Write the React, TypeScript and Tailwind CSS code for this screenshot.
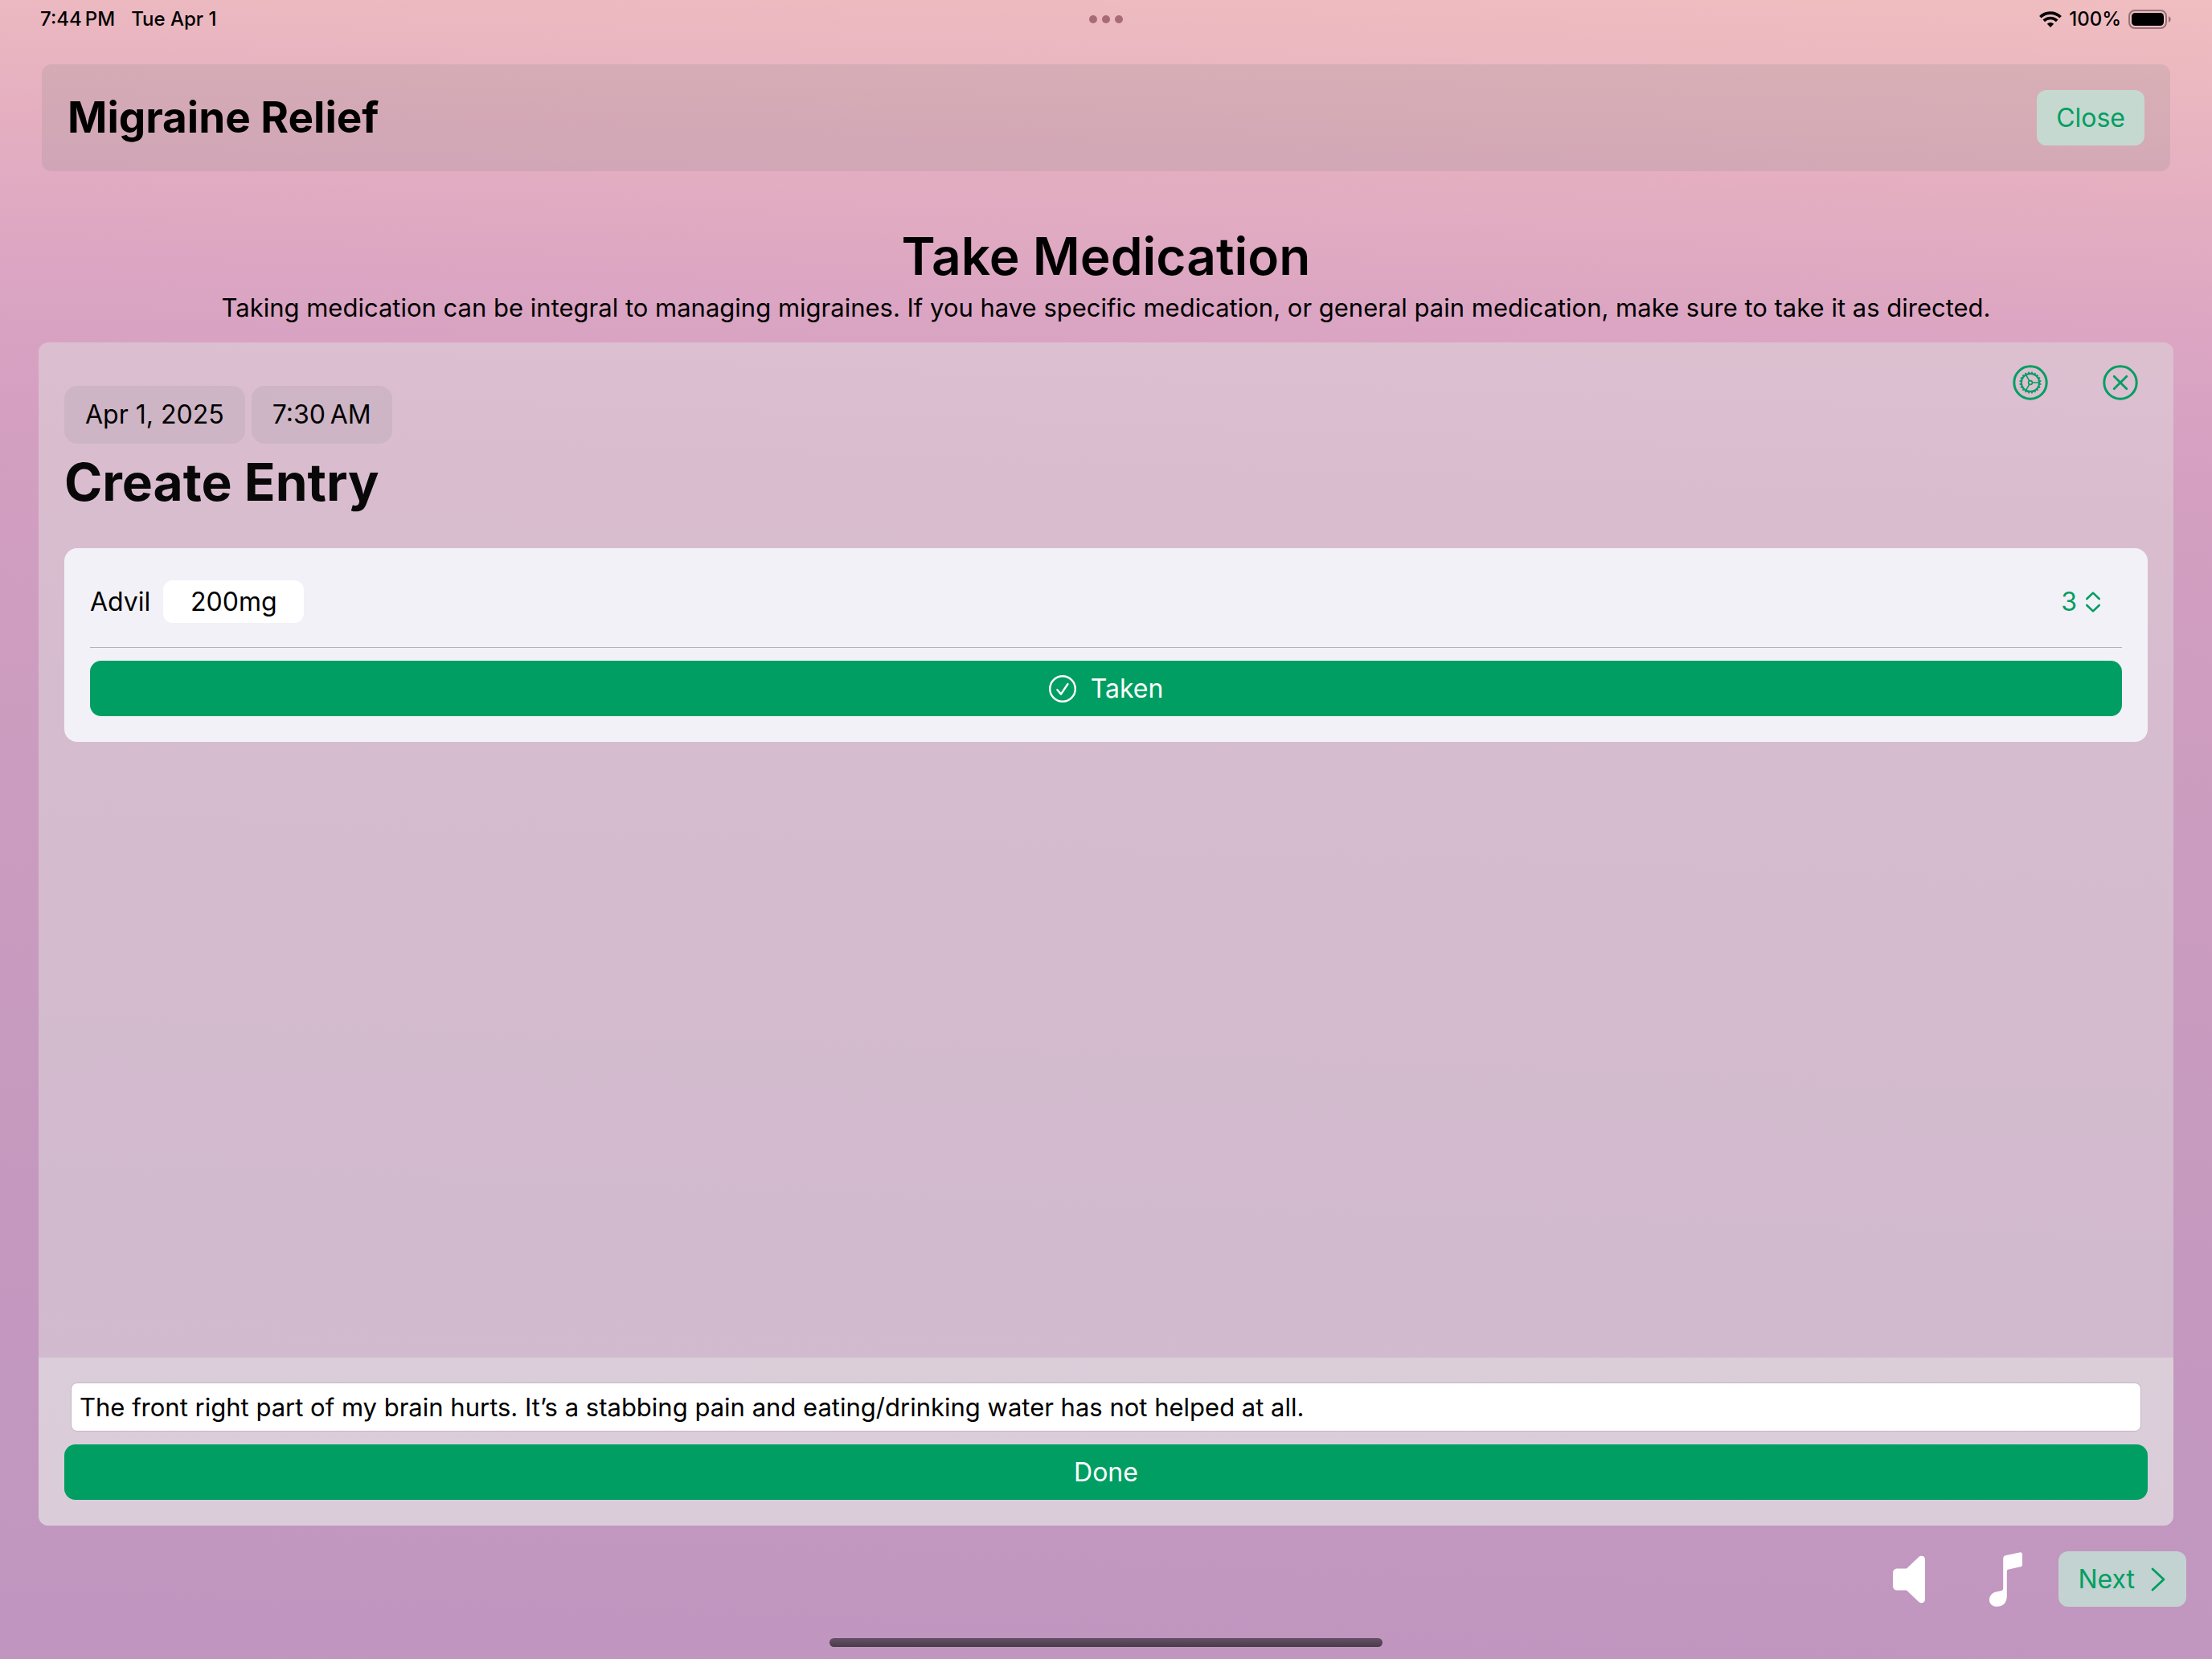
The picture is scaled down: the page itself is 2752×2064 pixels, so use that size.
import { useState } from "react";

function GearCircle() {
  const teeth = Array.from({ length: 20 }, (_, i) => (i * 360) / 20 + 9);
  return (
    <svg viewBox="0 0 44 44" className="size-11" fill="none" stroke="currentColor" aria-hidden="true">
      <circle cx="22" cy="22" r="20.2" strokeWidth="3" />
      <circle cx="22" cy="22" r="11.2" strokeWidth="2.2" />
      {teeth.map((a) => (
        <path key={a} d="M33 22h2.6" strokeWidth="1.9" transform={`rotate(${a} 22 22)`} />
      ))}
      <circle cx="22" cy="22" r="2.4" strokeWidth="1.6" />
      {[0, 120, 240].map((a) => (
        <path key={a} d="M24.4 22H33" strokeWidth="1.6" transform={`rotate(${a} 22 22)`} />
      ))}
    </svg>
  );
}

function CloseCircle() {
  return (
    <svg viewBox="0 0 44 44" className="size-11" fill="none" stroke="currentColor" strokeLinecap="round" aria-hidden="true">
      <circle cx="22" cy="22" r="20.2" strokeWidth="3" />
      <path d="M14.2 14.2l15.6 15.6M29.8 14.2L14.2 29.8" strokeWidth="2.8" />
    </svg>
  );
}

function CheckCircle() {
  return (
    <svg viewBox="0 0 34 34" className="size-[34px]" fill="none" stroke="currentColor" strokeLinecap="round" strokeLinejoin="round" aria-hidden="true">
      <circle cx="17" cy="17" r="15.8" strokeWidth="2.4" />
      <path d="M10.4 18.2l4.6 5.4L23.4 11" strokeWidth="2.4" />
    </svg>
  );
}

function StatusBar() {
  return (
    <div className="grid h-12 grid-cols-3 items-center px-[50px] text-2xl font-medium">
      <div className="flex gap-5">
        <span>7:44{"\u202f"}PM</span>
        <span>Tue Apr 1</span>
      </div>
      <div className="flex justify-center gap-1.5">
        <span className="size-2.5 rounded-full bg-[#a76b76]" />
        <span className="size-2.5 rounded-full bg-[#a76b76]" />
        <span className="size-2.5 rounded-full bg-[#a76b76]" />
      </div>
      <div className="flex items-center justify-end gap-[9px]">
        <svg viewBox="0 0 28 20" className="h-5 w-7" fill="none" stroke="currentColor" strokeWidth="3.7" aria-hidden="true">
          <path d="M1.4 7.2a18 18 0 0 1 25.2 0" />
          <path d="M5.8 11.8a11.8 11.8 0 0 1 16.4 0" />
          <path d="M14 20l-4.2-4.3a6.2 6.2 0 0 1 8.4 0z" fill="currentColor" stroke="none" />
        </svg>
        <span>100%</span>
        <svg viewBox="0 0 54 24" className="h-6 w-[54px]" aria-hidden="true">
          <rect x="1" y="1" width="46" height="22" rx="7" fill="none" stroke="#957277" strokeWidth="2" />
          <rect x="4" y="4" width="40" height="16" rx="4.5" fill="#000" />
          <path d="M50 8.2c3.6 1.4 3.6 6.2 0 7.6z" fill="#957277" />
        </svg>
      </div>
    </div>
  );
}

export default function App() {
  const [note, setNote] = useState(
    "The front right part of my brain hurts. It’s a stabbing pain and eating/drinking water has not helped at all.",
  );
  const [count, setCount] = useState(3);

  return (
    <div className="relative flex min-h-screen flex-col bg-[linear-gradient(182deg,#f0bec0_0%,#e4aec1_12%,#dba5c3_20%,#d49fc1_28%,#ce9dc0_40%,#c99bbf_57%,#c498bf_76%,#c096c0_100%)] font-['Inter',sans-serif] text-[32px] leading-10 text-black">
      <StatusBar />

      <header className="mx-[52px] mt-8 flex items-center justify-between rounded-xl bg-[#8c8c8c]/20 px-8 py-8">
        <h1 className="text-[53px] font-bold leading-[69px]">Migraine Relief</h1>
        <button type="button" className="h-[69px] rounded-xl bg-[#c6d9d0] px-6 text-[#009e62]">Close</button>
      </header>

      <section className="mt-[66px] text-center">
        <h2 className="text-[64px] font-semibold leading-20">Take Medication</h2>
        <p className="mt-1 text-[31px]">
          Taking medication can be integral to managing migraines. If you have specific medication, or general pain medication, make sure to take it as directed.
        </p>
      </section>

      <main className="mx-12 mt-[23px] flex flex-1 flex-col overflow-hidden rounded-xl bg-[#e0dbde]/50">
        <div className="flex-1 px-8 pt-7">
          <div className="flex items-start justify-between">
            <div className="mt-[26px] flex gap-2">
              <button type="button" className="h-[72px] rounded-2xl bg-[#787880]/12 px-[26px]">Apr 1, 2025</button>
              <button type="button" className="h-[72px] rounded-2xl bg-[#787880]/12 px-[26px]">7:30{"\u202f"}AM</button>
            </div>
            <div className="mr-3 flex gap-17 text-[#009e62]">
              <button type="button" aria-label="Medication settings"><GearCircle /></button>
              <button type="button" aria-label="Dismiss entry"><CloseCircle /></button>
            </div>
          </div>
          <h2 className="mt-2 text-[64px] font-bold leading-20 text-[#080808]">Create Entry</h2>

          <div className="mt-[42px] rounded-2xl bg-[#f2f1f7] px-8 pb-8 pt-10">
            <div className="flex items-center">
              <label htmlFor="dose">Advil</label>
              <input id="dose" defaultValue="200mg" className="ml-4 h-[53px] w-[175px] rounded-xl bg-white text-center" />
              <button
                type="button"
                aria-label="Number of doses"
                onClick={() => setCount(count + 1)}
                className="mr-[26px] ml-auto flex items-center gap-2.5 text-[#009e62]"
              >
                {count}
                <svg viewBox="0 0 20 28" className="h-7 w-5" fill="none" stroke="currentColor" strokeWidth="2.6" strokeLinecap="round" strokeLinejoin="round" aria-hidden="true">
                  <path d="M2.3 10L10 2.6 17.7 10M2.3 18l7.7 7.4 7.7-7.4" />
                </svg>
              </button>
            </div>
            <hr className="mt-[30px] border-t border-[#b3b2b9]" />
            <button type="button" className="mt-4 flex h-[69px] w-full items-center justify-center gap-[18px] rounded-[14px] bg-[#009e62] text-white">
              <CheckCircle />
              Taken
            </button>
          </div>
        </div>

        <div className="flex flex-col bg-[#e3e1e3]/50 p-8 pt-[31px]">
          <input
            aria-label="Notes"
            value={note}
            onChange={(e) => setNote(e.target.value)}
            className="mx-2 h-[61px] rounded-lg border border-[#c4b6c6] bg-white px-2.5 text-[31px]"
          />
          <button type="button" className="mt-4 h-[69px] rounded-[14px] bg-[#009e62] text-white">Done</button>
        </div>
      </main>

      <footer className="mt-8 mr-8 mb-[65px] flex items-center justify-end">
        <button type="button" aria-label="Sound" className="text-white">
          <svg viewBox="0 0 40 60" className="h-15 w-10" fill="currentColor" aria-hidden="true">
            <path d="M6 16.5h11L32 2.3C35-.5 40 .8 40 5v50c0 4.200-5 5.500-8 2.700L17 43.500H6c-4 0-6-2-6-6v-15c0-4 2-6 6-6z" />
          </svg>
        </button>
        <button type="button" aria-label="Music" className="ml-20 text-white">
          <svg viewBox="0 0 41 68" className="h-17 w-[41px]" fill="currentColor" aria-hidden="true">
            <path d="M17.200 8.500c0-2.600 1-3.800 3.500-4.400L37.500.4c2.200-.5 3.500.5 3.500 2.600v12.500c0 1.600-.7 2.500-2.300 2.800l-14.500 3.200c-1.700.4-2.400 1-2.400 2.700V55c0 8-5 12.800-12.300 12.800C4 67.800 0 64.500 0 59.500c0-5.300 3.700-9 9.300-10.200l4.900-1c2.200-.5 3-1.200 3-3.300z" />
          </svg>
        </button>
        <button type="button" className="ml-[45px] flex h-[69px] items-center gap-5 rounded-xl bg-[#c3d3d2] pr-[26px] pl-6 text-[#009e62]">
          Next
          <svg viewBox="0 0 18 30" className="h-[30px] w-[18px]" fill="none" stroke="currentColor" strokeWidth="2.800" strokeLinecap="round" strokeLinejoin="round" aria-hidden="true">
            <path d="M2 2l14 13L2 28" />
          </svg>
        </button>
      </footer>

      <div className="absolute bottom-[15px] left-1/2 h-[11px] w-1/4 -translate-x-1/2 rounded-full bg-linear-to-b from-[#675069] to-[#483c48]" />
    </div>
  );
}
